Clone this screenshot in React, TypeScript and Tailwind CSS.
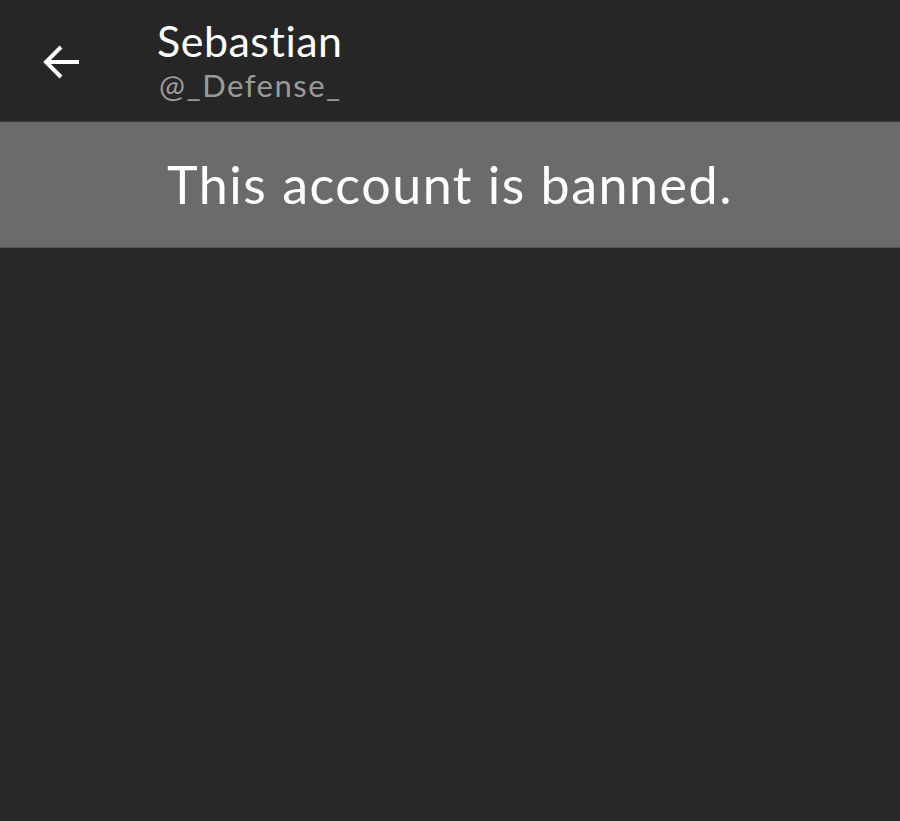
import React from "react";

function BackArrow() {
  return (
    <svg width="40" height="40" viewBox="0 0 40 40" fill="none" stroke="white" strokeWidth="4" strokeLinecap="square">
      <path d="M36 20H6" />
      <path d="M20 5L5 20L20 35" strokeLinecap="butt" />
    </svg>
  );
}

export default function App() {
  return (
    <div className="w-[900px] h-[821px] bg-[#282828] flex flex-col font-['Lato',sans-serif] [font-variant-ligatures:none]">
      <div className="h-[122px] bg-[#262626] flex items-start border-b border-[#3a3a3a]">
        <button className="mt-[42px] ml-[41px] w-[40px] h-[40px] flex items-center justify-center">
          <BackArrow />
        </button>
        <div className="ml-[76px] mt-[14px] flex flex-col">
          <span className="text-white text-[43px] leading-[54px] tracking-[0.5px]">Sebastian</span>
          <span className="text-[#9a9a9a] text-[31px] leading-[34px] tracking-[1.5px] ml-[2px]">@_Defense_</span>
        </div>
      </div>
      <div className="h-[126px] bg-[#6b6b6b] flex items-center justify-center border-b border-[#555]">
        <span className="text-white text-[52px] tracking-[1.5px] leading-none pb-[2px]">This account is banned.</span>
      </div>
    </div>
  );
}
